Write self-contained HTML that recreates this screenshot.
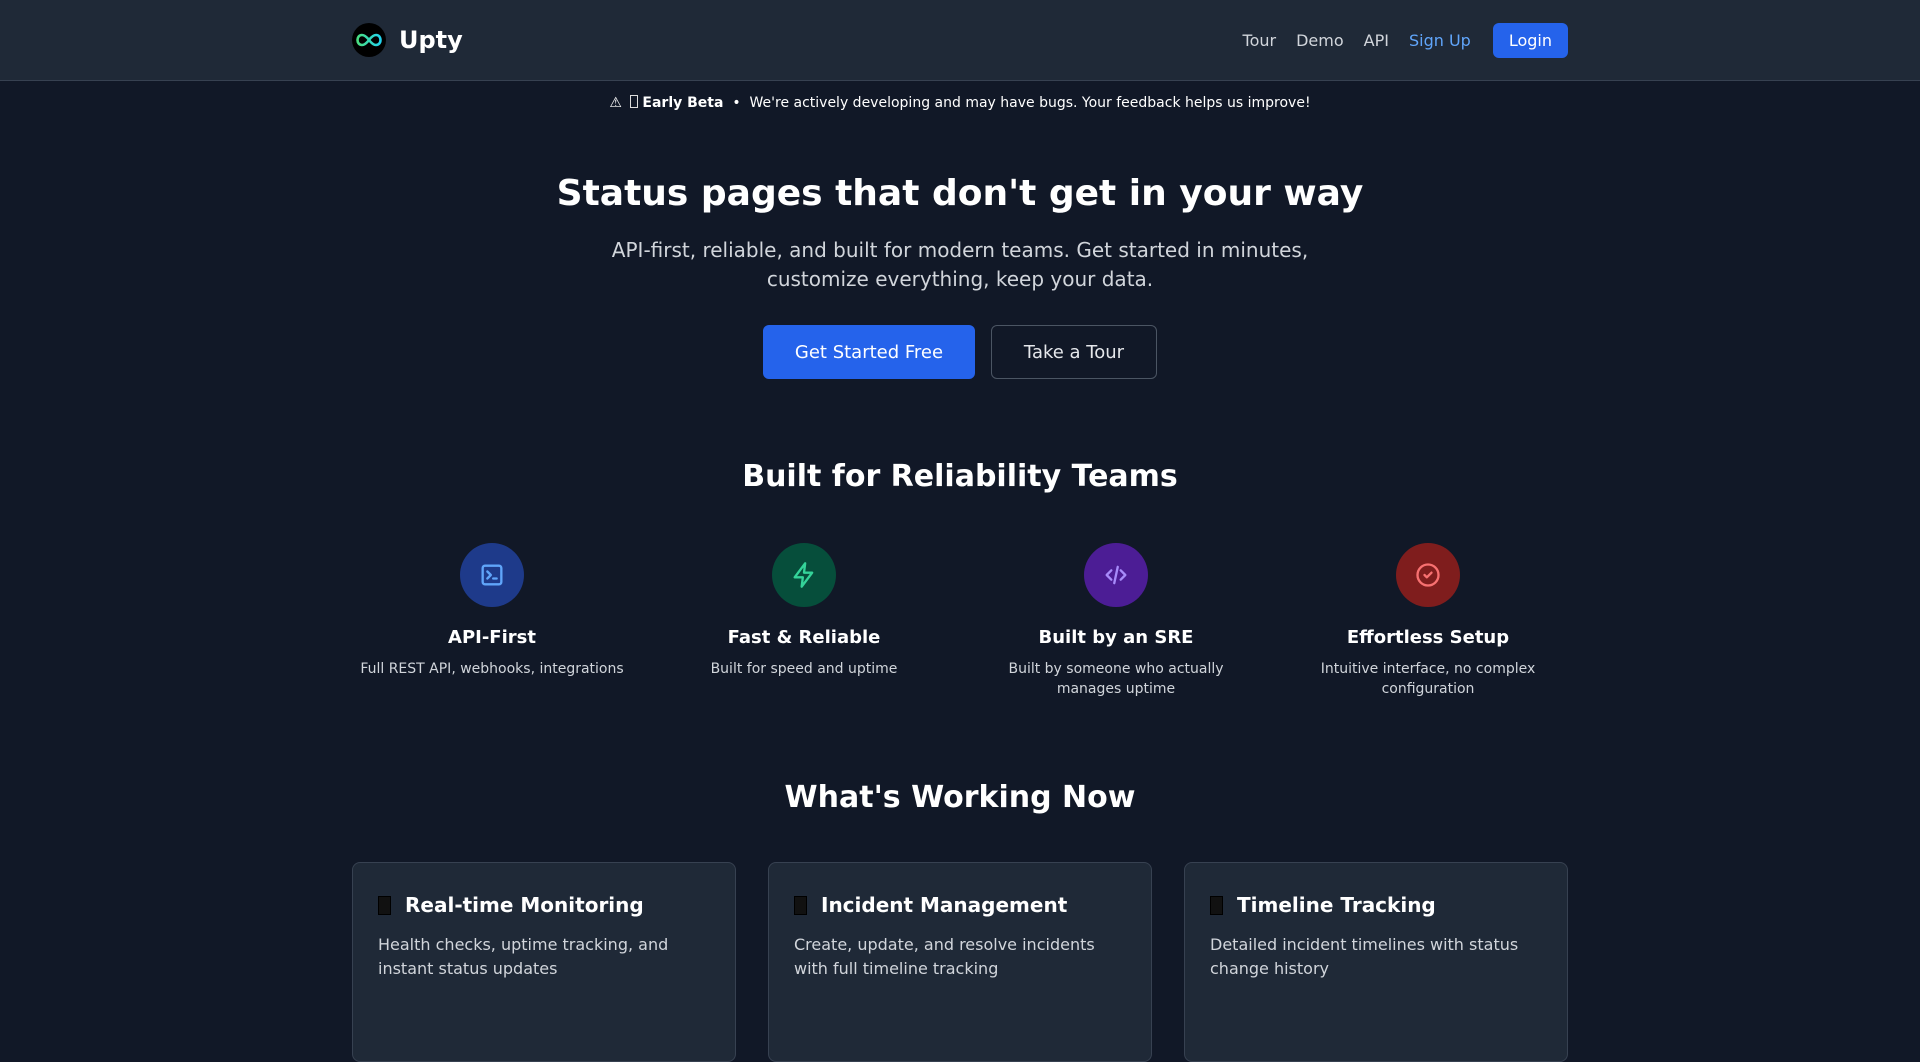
<!DOCTYPE html>
<html><head><meta charset="utf-8"><style>
*{margin:0;padding:0;box-sizing:border-box}
body{width:1920px;height:993px;overflow:hidden;background:#111827;color:#fff;font-family:"DejaVu Sans","Liberation Sans",sans-serif}
.nav{height:81px;background:#1f2937;border-bottom:1px solid #374151}
.wrap{width:1216px;margin:0 auto;position:relative}
.nav .wrap{height:80px;display:flex;align-items:center;justify-content:space-between}
.logo{display:flex;align-items:center;font-weight:bold;font-size:24px}
.logo .c{width:34px;height:34px;border-radius:50%;background:#000;margin-right:13px;display:flex;align-items:center;justify-content:center}
.links{display:flex;align-items:center;font-size:16px;color:#d1d5db}
.links a{margin-left:20px}
.links .su{color:#60a5fa}
.login{background:#2563eb;color:#fff;border-radius:6px;padding:8px 16px;margin-left:22px}
.beta{text-align:center;font-size:14px;margin-top:14px;color:#fff}
.tofu{display:inline-block;width:8px;height:13px;border:1px solid #ddd;vertical-align:-1px;margin:0 4px}
h1{text-align:center;font-size:36px;margin-top:62px}
.sub{text-align:center;font-size:20px;color:#d1d5db;line-height:29px;margin-top:22px}
.btns{display:flex;justify-content:center;gap:16px;margin-top:31px}
.b{height:54px;border-radius:6px;font-size:18px;display:flex;align-items:center;justify-content:center}
.b1{background:#2563eb;width:212px}
.b2{border:1px solid #4b5563;width:166px;color:#e5e7eb}
h2{text-align:center;font-size:30px;margin-top:80px}
.feat{display:grid;grid-template-columns:repeat(4,1fr);gap:32px;margin-top:49px;text-align:center}
.ic{width:64px;height:64px;border-radius:50%;margin:0 auto;display:flex;align-items:center;justify-content:center}
.ft{font-weight:bold;font-size:18px;margin-top:20px}
.fd{font-size:14px;color:#d1d5db;line-height:20px;margin-top:11px;padding:0 20px}
.cards{display:grid;grid-template-columns:repeat(3,1fr);gap:32px;margin-top:47px}
.card{background:#1f2937;border:1px solid #374151;border-radius:8px;height:200px;padding:30px 25px}
.ct{font-weight:bold;font-size:20px;display:flex;align-items:center}
.ct .tb{width:13px;height:19px;border:1.5px solid #000;background:#111;margin-right:14px}
.cd{font-size:16px;color:#d1d5db;line-height:24px;margin-top:16px}
</style></head><body>
<div class="nav"><div class="wrap">
<div class="logo"><div class="c"><svg width="26" height="14" viewBox="0 0 26 14"><defs><linearGradient id="g" x1="0" x2="1"><stop offset="0" stop-color="#4ade80"/><stop offset="1" stop-color="#22d3ee"/></linearGradient></defs><path d="M13 7C10 3 8 2 6 2 3 2 1.5 4.5 1.5 7S3 12 6 12c2 0 4-1 7-5s5-5 7-5c3 0 4.5 2.5 4.5 5S23 12 20 12c-2 0-4-1-7-5z" fill="none" stroke="url(#g)" stroke-width="2.6"/></svg></div>Upty</div>
<div class="links"><a>Tour</a><a>Demo</a><a>API</a><a class="su">Sign Up</a><span class="login">Login</span></div>
</div></div>
<div class="beta">⚠ <span class="tofu"></span><b>Early Beta</b> &nbsp;•&nbsp; We're actively developing and may have bugs. Your feedback helps us improve!</div>
<h1>Status pages that don't get in your way</h1>
<div class="sub">API-first, reliable, and built for modern teams. Get started in minutes,<br>customize everything, keep your data.</div>
<div class="btns"><div class="b b1">Get Started Free</div><div class="b b2">Take a Tour</div></div>
<h2>Built for Reliability Teams</h2>
<div class="wrap"><div class="feat">
<div><div class="ic" style="background:#1e3a8a"><svg width="28" height="28" viewBox="0 0 24 24" fill="none" stroke="#60a5fa" stroke-width="2" stroke-linecap="round" stroke-linejoin="round"><rect x="4" y="4" width="16" height="16" rx="2"/><path d="M8 9l3 3-3 3M13 15h3"/></svg></div><div class="ft">API-First</div><div class="fd" style="padding:0">Full REST API, webhooks, integrations</div></div>
<div><div class="ic" style="background:#064e3b"><svg width="28" height="28" viewBox="0 0 24 24" fill="none" stroke="#34d399" stroke-width="2" stroke-linejoin="round"><path d="M13 2L4 14h7l-1 8 9-12h-7z"/></svg></div><div class="ft">Fast &amp; Reliable</div><div class="fd">Built for speed and uptime</div></div>
<div><div class="ic" style="background:#4c1d95"><svg width="28" height="28" viewBox="0 0 24 24" fill="none" stroke="#a78bfa" stroke-width="2" stroke-linecap="round" stroke-linejoin="round"><path d="M8 8l-4 4 4 4M16 8l4 4-4 4M13.5 5l-3 14"/></svg></div><div class="ft">Built by an SRE</div><div class="fd" style="padding:0 18px">Built by someone who actually manages uptime</div></div>
<div><div class="ic" style="background:#7f1d1d"><svg width="28" height="28" viewBox="0 0 24 24" fill="none" stroke="#f87171" stroke-width="2" stroke-linecap="round" stroke-linejoin="round"><circle cx="12" cy="12" r="9"/><path d="M9 12l2 2 4-4"/></svg></div><div class="ft">Effortless Setup</div><div class="fd" style="padding:0 30px">Intuitive interface, no complex configuration</div></div>
</div></div>
<h2 style="margin-top:81px">What's Working Now</h2>
<div class="wrap"><div class="cards">
<div class="card"><div class="ct"><span class="tb"></span>Real-time Monitoring</div><div class="cd">Health checks, uptime tracking, and instant status updates</div></div>
<div class="card"><div class="ct"><span class="tb"></span>Incident Management</div><div class="cd">Create, update, and resolve incidents with full timeline tracking</div></div>
<div class="card"><div class="ct"><span class="tb"></span>Timeline Tracking</div><div class="cd">Detailed incident timelines with status change history</div></div>
</div></div>
</body></html>
